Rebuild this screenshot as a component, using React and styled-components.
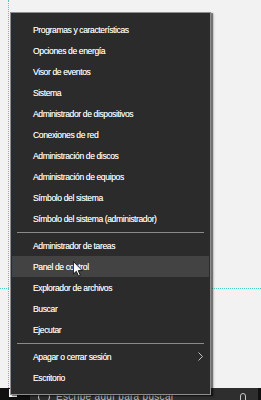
import React from "react";
import styled, { createGlobalStyle } from "styled-components";

const Global = createGlobalStyle`
  html, body { margin: 0; padding: 0; background: #f2f2f2; }
  #root { width: 261px; height: 400px; }
`;

const Screen = styled.div`
  position: relative;
  width: 261px;
  height: 400px;
  overflow: hidden;
  display: flex;
  flex-direction: column;
  background: #f2f2f2;
  font-family: "Liberation Sans", Arial, sans-serif;
`;

const Desktop = styled.div`
  position: relative;
  height: 388px;
  flex: none;
  background: #f2f2f2;
`;

const VGuide = styled.div`
  position: absolute;
  left: 8px;
  top: 0;
  bottom: 0;
  border-left: 1px dotted #4cc9c9;
`;

const HGuide = styled.div`
  position: absolute;
  left: 0;
  right: 0;
  top: 288px;
  border-top: 1px dotted #4cc9c9;
`;

const Taskbar = styled.div`
  flex: none;
  height: 40px;
  display: flex;
  align-items: flex-start;
  background: #101010;
`;

const StartButton = styled.div`
  width: 30px;
  height: 100%;
  display: flex;
  padding: 1px 0 0 9px;
  box-sizing: border-box;
`;

const StartPane = styled.div`
  width: 8px;
  height: 8px;
  background: #f5f5f5;
`;

const SearchBox = styled.div`
  width: 228px;
  height: 100%;
  background: #2e2e2e;
  display: flex;
  align-items: flex-start;
  padding: 3px 0 0 8px;
  box-sizing: border-box;
  gap: 6px;
  color: #b8b8b8;
  font-size: 10px;
`;

const SearchCircle = styled.div`
  width: 10px;
  height: 10px;
  border: 1.5px solid #d0d0d0;
  border-radius: 50%;
  flex: none;
`;

const SearchText = styled.span`
  flex: 1;
  line-height: 12px;
  letter-spacing: 0.3px;
`;

const Mic = styled.div`
  width: 4px;
  height: 8px;
  border: 1px solid #c8c8c8;
  border-radius: 3px;
  margin: 2px 12px 0 0;
`;

const Menu = styled.div`
  position: absolute;
  left: 10px;
  top: 12px;
  width: 199px;
  padding: 6px 0;
  background: #2b2b2b;
  border: 1px solid #8e8e8e;
  box-shadow: 2px 1px 1px rgba(0, 0, 0, 0.45), 3px 2px 2px rgba(0, 0, 0, 0.15);
  display: flex;
  flex-direction: column;
`;

const Item = styled.div`
  position: relative;
  height: 21px;
  margin: 0 1px;
  padding-left: 21px;
  display: flex;
  align-items: center;
  color: #f6f6f6;
  font-size: 8.6px;
  letter-spacing: -0.4px;
  text-shadow: 0 0 0.5px rgba(255, 255, 255, 0.7);
  background: ${(p) => (p.$active ? "#434343" : "transparent")};
  white-space: nowrap;
`;

const Separator = styled.div`
  height: 1px;
  margin: 3px 6px 2px;
  background: #8a8a8a;
`;

const Chevron = styled.svg`
  position: absolute;
  right: 6px;
  top: 6px;
`;

const Cursor = styled.svg`
  position: absolute;
  left: 61px;
  top: 5px;
`;

const groups = [
  [
    "Programas y características",
    "Opciones de energía",
    "Visor de eventos",
    "Sistema",
    "Administrador de dispositivos",
    "Conexiones de red",
    "Administración de discos",
    "Administración de equipos",
    "Símbolo del sistema",
    "Símbolo del sistema (administrador)",
  ],
  [
    "Administrador de tareas",
    "Panel de control",
    "Explorador de archivos",
    "Buscar",
    "Ejecutar",
  ],
  ["Apagar o cerrar sesión", "Escritorio"],
];

export default function App() {
  return (
    <>
      <Global />
      <Screen>
        <Desktop>
          <VGuide />
          <HGuide />
        </Desktop>
        <Taskbar>
          <StartButton>
            <StartPane />
          </StartButton>
          <SearchBox>
            <SearchCircle />
            <SearchText>Escribe aquí para buscar</SearchText>
            <Mic />
          </SearchBox>
        </Taskbar>
        <Menu>
          {groups.map((g, gi) => (
            <React.Fragment key={gi}>
              {gi > 0 && <Separator />}
              {g.map((label) => (
                <Item key={label} $active={label === "Panel de control"}>
                  {label}
                  {label === "Apagar o cerrar sesión" && (
                    <Chevron width="5" height="9" viewBox="0 0 5 9">
                      <path d="M0.5 0.5 L4.5 4.5 L0.5 8.5" fill="none" stroke="#c4c4c4" strokeWidth="1" />
                    </Chevron>
                  )}
                  {label === "Panel de control" && (
                    <Cursor width="10" height="16" viewBox="0 0 12 19">
                      <path
                        d="M0.5 0.5 L0.5 15.5 L4 12.2 L6.6 18 L8.8 17 L6.3 11.4 L11 11.4 Z"
                        fill="#ffffff"
                        stroke="#000000"
                        strokeWidth="1"
                        strokeLinejoin="round"
                      />
                    </Cursor>
                  )}
                </Item>
              ))}
            </React.Fragment>
          ))}
        </Menu>
      </Screen>
    </>
  );
}
